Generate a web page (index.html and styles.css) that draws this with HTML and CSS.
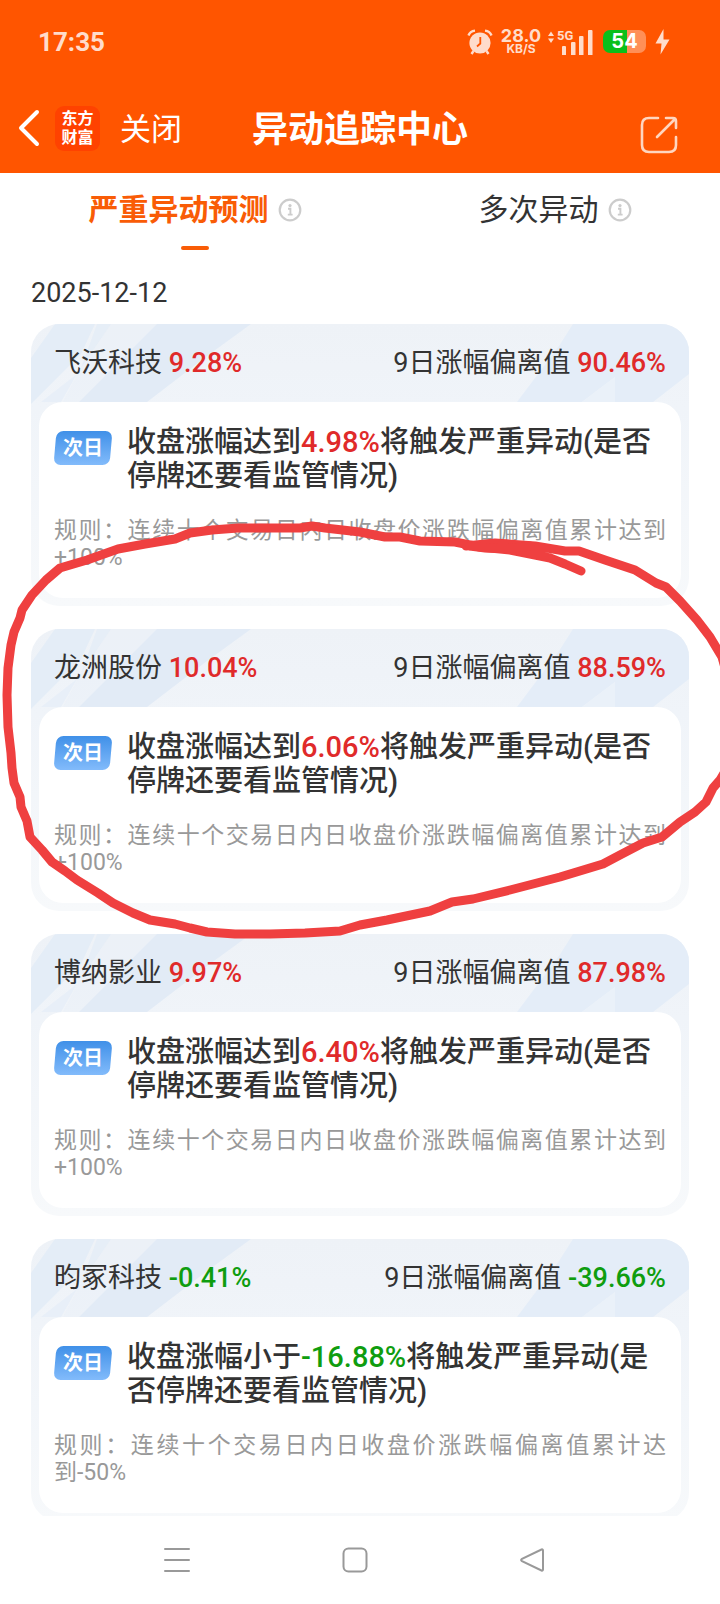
FILE: index.html
```html
<!DOCTYPE html>
<html lang="zh-CN">
<head>
<meta charset="utf-8">
<meta name="viewport" content="width=device-width, initial-scale=1">
<title>异动追踪中心</title>
<link rel="stylesheet" href="styles.css">
</head>
<body>
<svg class="defs" aria-hidden="true">
  <symbol id="shine-left" viewBox="0 0 230 110">
    <path fill="#e4edf7" d="M24 0H64L50 30L0 80V34Z"/>
    <path fill="#e6eef7" d="M66 0H80L50 44L58 22Z"/>
    <path fill="#e8eff8" d="M46 50L30 78H10Z"/>
    <path fill="#e9f0f8" d="M80 0H126L48 78H32L50 44Z" opacity=".5"/>
    <path fill="#e2ebf6" d="M126 0H220L176 32L116 78H48Z"/>
  </symbol>
  <symbol id="shine-right" viewBox="0 0 180 110">
    <path fill="#e4edf8" d="M64 0H180V50L144 78H106V53L73 78H8L50 22Z"/>
    <path fill="#eaf1f9" d="M106 53V78H73Z"/>
  </symbol>
  <symbol id="info" viewBox="0 0 24 24">
    <circle cx="12" cy="12" r="10.3" fill="none" stroke="#ccc" stroke-width="2.2"/>
    <circle cx="12" cy="7.6" r="1.6" fill="#ccc"/>
    <path d="M10 10.800H12.400V16.400M9.800 16.600H14.600" fill="none" stroke="#ccc" stroke-width="1.900"/>
  </symbol>
</svg>

<div class="app">
  <header class="top">
    <div class="status">
      <time class="clock">17:35</time>
      <div class="indicators">
        <svg class="alarm" viewBox="0 0 26 26" aria-hidden="true">
          <circle cx="13" cy="14" r="10.6" fill="#ffdccb"/>
          <path d="M1.500 6.500Q3 2 8 1.600M24.500 6.500Q23 2 18 1.600M6.500 22L4.500 25M19.500 22L21.500 25" fill="none" stroke="#ffdccb" stroke-width="2.400"/>
          <path d="M13.300 8V14.500L10 17.500" fill="none" stroke="#ff5500" stroke-width="1.800"/>
        </svg>
        <span class="speed"><b>28.0</b><small>KB/S</small></span>
        <span class="network">
          <svg class="bars" viewBox="0 0 46 26" aria-hidden="true">
            <path fill="#ffdccb" d="M1 7L4 2.500L7 7ZM1 9.500L4 14L7 9.500ZM15 18Q15 17 16 17H18Q19 17 19 18V26H15ZM24 14Q24 13 25 13H27.500Q28.500 13 28.500 14V26H24ZM32 8Q32 7 33 7H35.500Q36.500 7 36.500 8V26H32ZM41 2Q41 1 42 1H44.500Q45.500 1 45.500 2V26H41Z"/>
          </svg>
          <span class="gen">5G</span>
        </span>
        <span class="battery"><span class="level">54</span></span>
        <svg class="bolt" viewBox="0 0 15 26" aria-hidden="true"><path fill="#ffdccb" d="M8.500 0L0.500 14.500H6.500L5.500 25.500L14.500 10.500H8.500Z"/></svg>
      </div>
    </div>
    <nav class="bar">
      <div class="bar-left">
        <button class="back" type="button" aria-label="返回">
          <svg viewBox="0 0 22 38" aria-hidden="true"><path d="M19 3L3 19L19 35" fill="none" stroke="#fff" stroke-width="4" stroke-linecap="round" stroke-linejoin="round"/></svg>
        </button>
        <span class="logo"><span>东方</span><span>财富</span></span>
        <button class="close" type="button">关闭</button>
      </div>
      <h1 class="title">异动追踪中心</h1>
      <button class="share" type="button" aria-label="分享">
        <svg viewBox="0 0 38 38" aria-hidden="true"><path d="M18 2H9Q2 2 2 9V29Q2 36 9 36H29Q36 36 36 29V21M26 2H33Q36 2 36 5V12M35 3L17 21" fill="none" stroke="#ffd6c0" stroke-width="2.600" stroke-linecap="round" stroke-linejoin="round"/></svg>
      </button>
    </nav>
  </header>

  <div class="tabs" role="tablist">
    <button class="tab active" role="tab" aria-selected="true" type="button"><span>严重异动预测</span><svg class="info" aria-hidden="true"><use href="#info"/></svg></button>
    <button class="tab" role="tab" aria-selected="false" type="button"><span>多次异动</span><svg class="info" aria-hidden="true"><use href="#info"/></svg></button>
  </div>

  <main class="list">
    <h2 class="date">2025-12-12</h2>

    <article class="card">
      <svg class="shine left" aria-hidden="true"><use href="#shine-left"/></svg>
      <svg class="shine right" aria-hidden="true"><use href="#shine-right"/></svg>
      <div class="head"><span>飞沃科技 <b class="up">9.28%</b></span><span>9日涨幅偏离值 <b class="up">90.46%</b></span></div>
      <div class="body">
        <div class="alert"><span class="badge">次日</span><p class="message">收盘涨幅达到<b class="up">4.98%</b>将触发严重异动(是否停牌还要看监管情况)</p></div>
        <p class="rule">规则：连续十个交易日内日收盘价涨跌幅偏离值累计达到+100%</p>
      </div>
    </article>

    <article class="card">
      <svg class="shine left" aria-hidden="true"><use href="#shine-left"/></svg>
      <svg class="shine right" aria-hidden="true"><use href="#shine-right"/></svg>
      <div class="head"><span>龙洲股份 <b class="up">10.04%</b></span><span>9日涨幅偏离值 <b class="up">88.59%</b></span></div>
      <div class="body">
        <div class="alert"><span class="badge">次日</span><p class="message">收盘涨幅达到<b class="up">6.06%</b>将触发严重异动(是否停牌还要看监管情况)</p></div>
        <p class="rule">规则：连续十个交易日内日收盘价涨跌幅偏离值累计达到+100%</p>
      </div>
    </article>

    <article class="card">
      <svg class="shine left" aria-hidden="true"><use href="#shine-left"/></svg>
      <svg class="shine right" aria-hidden="true"><use href="#shine-right"/></svg>
      <div class="head"><span>博纳影业 <b class="up">9.97%</b></span><span>9日涨幅偏离值 <b class="up">87.98%</b></span></div>
      <div class="body">
        <div class="alert"><span class="badge">次日</span><p class="message">收盘涨幅达到<b class="up">6.40%</b>将触发严重异动(是否停牌还要看监管情况)</p></div>
        <p class="rule">规则：连续十个交易日内日收盘价涨跌幅偏离值累计达到+100%</p>
      </div>
    </article>

    <article class="card">
      <svg class="shine left" aria-hidden="true"><use href="#shine-left"/></svg>
      <svg class="shine right" aria-hidden="true"><use href="#shine-right"/></svg>
      <div class="head"><span>昀冢科技 <b class="down">-0.41%</b></span><span>9日涨幅偏离值 <b class="down">-39.66%</b></span></div>
      <div class="body">
        <div class="alert"><span class="badge">次日</span><p class="message">收盘涨幅小于<b class="down">-16.88%</b>将触发严重异动(是否停牌还要看监管情况)</p></div>
        <p class="rule">规则：连续十个交易日内日收盘价涨跌幅偏离值累计达到-50%</p>
      </div>
    </article>
  </main>

  <footer class="system">
    <button type="button" aria-label="菜单"><svg viewBox="0 0 26 26" aria-hidden="true"><path d="M1 2H25M1 13H25M1 24H25"/></svg></button>
    <button type="button" aria-label="主页"><svg viewBox="0 0 26 26" aria-hidden="true"><rect x="1.500" y="1.500" width="23" height="23" rx="5"/></svg></button>
    <button type="button" aria-label="后退"><svg viewBox="0 0 26 26" aria-hidden="true"><path d="M21.500 2.500Q23 2 23 3.500V22.500Q23 24 21.500 23.500L2 14.200Q.200 13 2 11.800Z"/></svg></button>
  </footer>

  <svg class="marker" viewBox="0 0 720 1604" preserveAspectRatio="none" aria-hidden="true">
    <path d="M466 546L495 543L535 546L565 551L579 551L605 560L635 570L656 583L666 587L680 601L697 620L710 637L722 657L734 700L732 760L720 780L713 788L706 802L695 812L680 822L662 837L643 843L620 855L603 864L560 877L510 890L473 899L452 902L430 911L387 920L360 925L340 931L305 933L270 934L235 934L207 932L190 928L175 924L150 920L133 913L113 903L98 893L77 880L65 871L52 862L42 850L30 837L27 821L21 807L20 797L14 783L12 768L11 753L8 727L7 695L8 668L11 645L14 632L20 618L22 610L32 595L46 580L60 568L87 560L118 549L145 544L175 539L190 533L212 530L238 528L300 528L312 526L325 528L360 532L385 537L400 537L420 541L455 542L480 547L510 550L530 554L550 558L565 564L581 571"/>
    <path d="M470 546Q500 551 530 546"/>
  </svg>
</div>
</body>
</html>
```

FILE: styles.css
```css
* { box-sizing: border-box; margin: 0; padding: 0; }

body {
  font-family: Roboto, "Noto Sans CJK SC", sans-serif;
  color: #333;
  background: #fff;
}

button {
  font: inherit;
  color: inherit;
  background: none;
  border: 0;
}

svg { display: block; }

.defs { position: absolute; width: 0; height: 0; }

.app {
  position: relative;
  display: flex;
  flex-direction: column;
  height: 100vh;
  overflow: hidden;
}

/* Header */
.top { flex: none; background: #ff5500; }

.status {
  display: flex;
  justify-content: space-between;
  align-items: center;
  height: 83px;
  padding: 0 50px 0 38px;
}

.clock { font-size: 26px; font-weight: 700; color: #ffdccb; }

.indicators { display: flex; align-items: center; color: #ffdccb; }

.alarm { width: 26px; height: 26px; margin-right: 9px; }

.speed {
  display: flex;
  flex-direction: column;
  align-items: center;
  width: 38px;
  margin-right: 7px;
  font-family: Inter, sans-serif;
}

.speed b { font-size: 18px; line-height: 14px; font-weight: 700; }
.speed small { font-size: 12px; line-height: 12px; font-weight: 700; }

.network { position: relative; margin-right: 10px; }
.bars { width: 46px; height: 26px; }
.gen { position: absolute; left: 10px; top: 0; font-size: 13px; line-height: 13px; font-weight: 700; }

.battery {
  display: flex;
  width: 43px;
  height: 23px;
  margin-right: 9px;
  border-radius: 7px;
  background: linear-gradient(90deg, #0abf1b 56%, #ff8f57 56%);
  color: #fff;
}

.level { margin: auto; font-family: Inter, sans-serif; font-size: 20px; line-height: 23px; font-weight: 700; }

.bolt { width: 15px; height: 26px; }

.bar {
  display: grid;
  grid-template-columns: 1fr auto 1fr;
  align-items: center;
  height: 90px;
  padding: 0 42px 0 18px;
  color: #fff;
}

.bar-left { display: flex; align-items: center; }

.back svg { width: 22px; height: 38px; }

.logo {
  display: flex;
  flex-direction: column;
  align-items: center;
  justify-content: center;
  width: 45px;
  height: 45px;
  margin: 0 20px 0 15px;
  border-radius: 9px;
  background: #ff4200;
  font-size: 16px;
  line-height: 19px;
  font-weight: 700;
}

.close { padding-top: 3px; font-size: 31px; line-height: 40px; }

.title { padding: 3px 0 0 24px; font-size: 36px; line-height: 44px; font-weight: 700; }

.share { justify-self: end; padding-top: 14px; }
.share svg { width: 38px; height: 38px; }

/* Tabs */
.tabs { display: flex; flex: none; height: 77px; }

.tab {
  position: relative;
  display: flex;
  flex: 1;
  align-items: center;
  justify-content: center;
  gap: 9px;
  padding: 0 0 3px 30px;
  font-size: 30px;
  line-height: 40px;
}

.tab.active { color: #f95c06; font-weight: 700; }

.tab.active::after {
  content: "";
  position: absolute;
  left: calc(50% + 1px);
  bottom: 0;
  width: 28px;
  height: 4px;
  border-radius: 2px;
  background: #f95c06;
}

.info { width: 24px; height: 24px; }

/* List */
.list {
  flex: 1;
  min-height: 0;
  padding: 27px 31px 0;
  overflow-y: auto;
  scrollbar-width: none;
}

.date { font-size: 27px; line-height: 32px; font-weight: 400; margin-bottom: 15px; }

.card {
  position: relative;
  margin-bottom: 23px;
  padding: 0 8px 8px;
  border-radius: 28px;
  overflow: hidden;
  background: linear-gradient(#eef2f7, #f0f4f9 30%, #f7f9fb);
}

.shine { position: absolute; top: 0; height: 110px; }
.shine.left { left: 0; width: 230px; }
.shine.right { right: 0; width: 180px; }

.head {
  position: relative;
  display: flex;
  justify-content: space-between;
  align-items: center;
  height: 78px;
  padding: 0 15px;
  font-size: 27px;
  line-height: 34px;
}

.head b, .message b { font-weight: 500; }
.up { color: #e02a2a; }
.down { color: #0f9d0f; }

.body {
  position: relative;
  padding: 23px 15px 27px;
  border-radius: 24px;
  background: #fff;
}

.alert { display: flex; align-items: flex-start; gap: 15px; margin-bottom: 24px; }

.badge {
  position: relative;
  z-index: 0;
  flex: none;
  width: 58px;
  margin-top: 6px;
  font-size: 20px;
  line-height: 34px;
  font-weight: 700;
  text-align: center;
  color: #fff;
}

.badge::before {
  content: "";
  position: absolute;
  inset: 0 1px;
  z-index: -1;
  border-radius: 7px;
  background: linear-gradient(#4090e8, #82bbfb);
  transform: skewX(-5deg);
}

.message { font-size: 29px; line-height: 34px; font-weight: 500; }

.rule {
  font-size: 23px;
  line-height: 27px;
  color: #999;
  text-align: justify;
}

/* System navigation */
.system {
  display: flex;
  flex: none;
  height: 88px;
  padding: 0 98px 0 88px;
}

.system button { display: flex; flex: 1; align-items: center; justify-content: center; }

.system svg {
  width: 26px;
  height: 26px;
  fill: none;
  stroke: #999;
  stroke-width: 2;
  stroke-linecap: round;
}

/* Hand-drawn mark */
.marker {
  position: absolute;
  inset: 0;
  width: 100%;
  height: 100%;
  pointer-events: none;
  fill: none;
  stroke: #ef4040;
  stroke-width: 9;
  stroke-linecap: round;
  stroke-linejoin: round;
}
```
